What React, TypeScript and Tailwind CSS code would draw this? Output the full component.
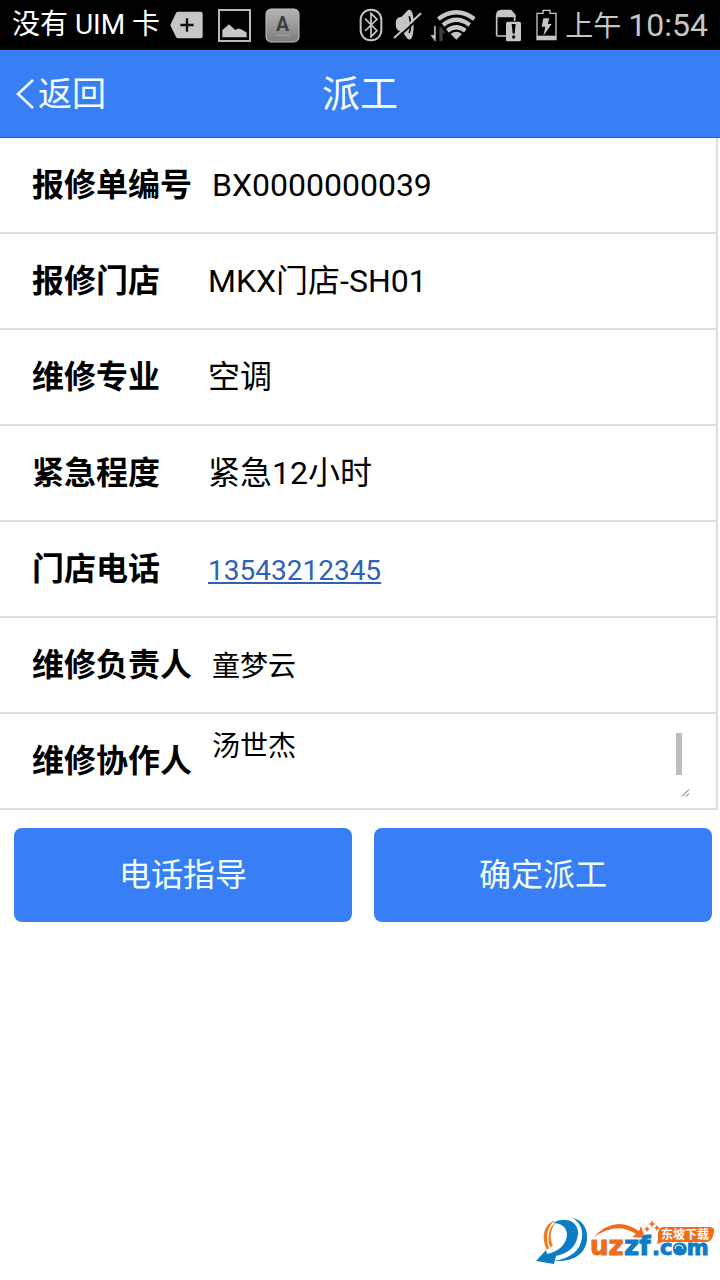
import React, { useState } from 'react';

interface RowProps {
  label: string;
  htmlFor?: string;
  children: React.ReactNode;
}

const Row: React.FC<RowProps> = ({ label, htmlFor, children }) => (
  <div className="flex h-24 items-center border-b-2 border-[#dcdcdc] pl-8 pr-[26px]">
    {htmlFor ? (
      <label htmlFor={htmlFor} className="w-44 shrink-0 text-[32px] font-bold">
        {label}
      </label>
    ) : (
      <span className="w-44 shrink-0 text-[32px] font-bold">{label}</span>
    )}
    {children}
  </div>
);

const StatusBar = () => (
  <div className="flex h-[50px] items-center justify-between bg-black px-3">
    <div className="flex items-center">
      <span className="whitespace-nowrap text-[28px] leading-none text-white">没有 UIM 卡</span>
      {/* Tag with plus */}
      <svg className="ml-2.5 shrink-0" width="33" height="28" viewBox="0 0 99 84">
        <path d="M24 2h68q6 0 6 6v68q0 6-6 6H24q-4 0-6-4L2 45q-2-3 0-6L18 6q2-4 6-4z" fill="#c6c6c6" />
        <path d="M31 42h40M51 22v40" stroke="#111" strokeWidth="7" />
      </svg>
      {/* Screenshot saved */}
      <svg className="ml-[15px] shrink-0" width="33" height="33" viewBox="0 0 98 98">
        <rect x="3" y="3" width="92" height="92" fill="none" stroke="#b9b9b9" strokeWidth="6" />
        <path d="M13 84V62l20-17 18 17 9-4 10 3 15 9v14z" fill="#c6c6c6" />
      </svg>
      {/* Input method */}
      <svg className="ml-[14px] shrink-0" width="35" height="35" viewBox="0 0 104 104">
        <defs>
          <linearGradient id="key" x1="0" y1="0" x2="0" y2="1">
            <stop offset="0" stopColor="#b4b4b4" />
            <stop offset="1" stopColor="#7d7d7d" />
          </linearGradient>
        </defs>
        <rect x="3" y="3" width="98" height="98" rx="15" fill="url(#key)" stroke="#c4c4c4" strokeWidth="3" />
        <text x="52" y="68" textAnchor="middle" fontSize="58" fontWeight="bold" fill="#3c3c3c" fontFamily="Roboto, sans-serif">
          A
        </text>
        <path d="M32 81h40" stroke="#aaa" strokeWidth="3" />
      </svg>
    </div>

    <div className="flex items-center">
      {/* Bluetooth */}
      <svg className="shrink-0" width="24" height="34" viewBox="0 0 72 102">
        <rect x="5" y="5" width="62" height="92" rx="30" fill="none" stroke="#c6c6c6" strokeWidth="6" />
        <path d="M18 32l36 36-18 18V16l18 18-36 35" fill="none" stroke="#c6c6c6" strokeWidth="5" />
      </svg>
      {/* Muted speaker */}
      <svg className="ml-2.5 shrink-0" width="29" height="32" viewBox="0 0 87 96">
        <path d="M10 32q4-8 16-9L42 6q8-8 14 1 6 12 6 40t-6 40q-6 9-14 1L27 67q-13 0-17-9-4-13 0-26z" fill="#c6c6c6" />
        <path d="M49 22q7 26 0 50" fill="none" stroke="#000" strokeWidth="5" />
        <path d="M8 91L90 17" stroke="#000" strokeWidth="6" />
        <path d="M3 87L84 13" stroke="#c6c6c6" strokeWidth="6" />
      </svg>
      {/* Wifi with traffic arrows */}
      <svg className="ml-2 shrink-0" width="47" height="33" viewBox="0 0 141 99">
        <path d="M79 92L62 75q17-13 34 0z" fill="#c6c6c6" />
        <path d="M52 65q27-20 54 0M39 48q40-31 80 0M25 30q54-40 108 0" fill="none" stroke="#c6c6c6" strokeWidth="13" />
        <path d="M16 52v44L3 79h10V52z" fill="#c6c6c6" stroke="#c6c6c6" strokeWidth="2" />
        <path d="M28 97V53h4l15 20h-9v24z" fill="#3c3c3c" />
      </svg>
      {/* No SIM */}
      <svg className="ml-[18px] shrink-0" width="27" height="33" viewBox="0 0 81 99">
        <path d="M5 80V19L19 5h28l12 13v18M5 81h31" fill="none" stroke="#c6c6c6" strokeWidth="5" />
        <path d="M4 25V14Q5 3 18 3h30l13 14v8z" fill="#c6c6c6" />
        <rect x="33" y="38" width="45" height="59" rx="5" fill="#c6c6c6" />
        <path d="M50 45h12l-3 29h-6z" fill="#000" />
        <circle cx="56" cy="84" r="5" fill="#000" />
      </svg>
      {/* Charging battery */}
      <svg className="ml-3.5 shrink-0" width="21" height="32" viewBox="0 0 63 96">
        <path d="M3 92V13h18V4h21v9h18v79z" fill="none" stroke="#c6c6c6" strokeWidth="4" />
        <rect x="3" y="80" width="57" height="13" fill="#c6c6c6" />
        <path d="M22 28h18l-5 17h12L22 80l6-27H17z" fill="#c6c6c6" />
      </svg>
      <span className="ml-2 whitespace-nowrap text-[28px] leading-none text-[#c6c6c6]">
        上午 <span className="text-[32px] leading-none">10:54</span>
      </span>
    </div>
  </div>
);

const SiteLogo = () => (
  <svg width="192" height="54" viewBox="0 0 192 54">
    {/* Round arrow mark */}
    <path d="M27 2C15 7 13 20 19 32L21 30C17 19 19 9 27 2z" fill="#ef7d1f" />
    <path d="M28 4C20 10 19 20 22 29L25 28C21 20 22 12 28 4z" fill="#ef7d1f" />
    <path
      d="M25 5C35-2 51 2 50 16C49 28 41 35 28 38L26 46L8 43L18 32L19 36C30 34 38 27 39 17C39 9 33 5 25 5z"
      fill="#0d7cc4"
    />
    <path d="M45 0C57 3 60 14 59 22C57 36 46 44 26 43C43 40 52 33 54 20C55 11 52 5 45 0z" fill="#0d7cc4" />
    {/* Swoosh above the name */}
    <path d="M65 20Q86-4 111 13L113 8L117 20L104 19L108 16Q88 3 65 20z" fill="#ef6d1a" />
    <g fontFamily="'DejaVu Sans', sans-serif" fontWeight="bold" strokeWidth="1">
      <text x="62" y="37" fontSize="26" fill="#ef6d1a" stroke="#ef6d1a">
        uz
      </text>
      <text x="96" y="37" fontSize="26" fill="#0d7cc4" stroke="#0d7cc4">
        zf
      </text>
      <text x="124" y="37" fontSize="21" fill="#0d7cc4" stroke="#0d7cc4">
        .com
      </text>
    </g>
    <circle cx="151" cy="31" r="4" fill="#0d7cc4" />
    <path d="M147 31a4 4 0 0 1 8 0" fill="none" stroke="#fff" strokeWidth="1" />
    {/* Sparkles */}
    <path
      d="M124 2l1 3 3 1-3 1-1 3-1-3-3-1 3-1zM119 8l1 2 2 1-2 1-1 2-1-2-2-1 2-1zM129 7l1 2 2 1-2 1-1 2-1-2-2-1 2-1z"
      fill="#ef6d1a"
    />
    <path d="M135 9h46q6 0 5 5l-1 4q-2 6-7 6h-43l-6 2 1-5v-6q1-6 5-6z" fill="#ef6d1a" />
    <text x="133" y="21" fontSize="12" fontWeight="bold" fill="#fff" fontFamily="'Noto Sans CJK SC', sans-serif">
      东坡下载
    </text>
  </svg>
);

export default function App() {
  const [orderNo, setOrderNo] = useState('BX0000000039');
  const [owner, setOwner] = useState('童梦云');
  const [helpers, setHelpers] = useState('汤世杰');

  return (
    <div className="flex min-h-screen flex-col bg-white font-['Roboto','Noto_Sans_CJK_SC',sans-serif] text-black">
      <StatusBar />

      <header className="grid h-22 grid-cols-3 items-center border-b border-[#2a5cc0] bg-[#387ff5] px-4 text-[#f4ffff]">
        <button type="button" className="flex items-center gap-1 text-[34px] leading-none">
          <svg width="18" height="30" viewBox="0 0 18 30" fill="none" stroke="currentColor" strokeWidth="2.5">
            <path d="M17 1L2 15l15 14" />
          </svg>
          返回
        </button>
        <h1 className="text-center text-[38px] leading-none">派工</h1>
      </header>

      <main>
        <div className="mr-0.5 border-r-2 border-[#dcdcdc]">
          <Row label="报修单编号" htmlFor="order-no">
            <input
              id="order-no"
              className="min-w-0 flex-1 px-1 text-[32px] outline-none"
              value={orderNo}
              onChange={(e) => setOrderNo(e.target.value)}
            />
          </Row>
          <Row label="报修门店">
            <span className="text-[32px]">MKX门店-SH01</span>
          </Row>
          <Row label="维修专业">
            <span className="text-[32px]">空调</span>
          </Row>
          <Row label="紧急程度">
            <span className="text-[32px]">紧急12小时</span>
          </Row>
          <Row label="门店电话">
            <a href="tel:13543212345" className="pt-1 text-[28px] text-[#2f62b5] underline decoration-2 underline-offset-2">
              13543212345
            </a>
          </Row>
          <Row label="维修负责人" htmlFor="owner">
            <input
              id="owner"
              className="min-w-0 flex-1 px-1 pt-1 text-[28px] outline-none"
              value={owner}
              onChange={(e) => setOwner(e.target.value)}
            />
          </Row>
          <Row label="维修协作人" htmlFor="helpers">
            <div className="relative flex-1">
              <textarea
                id="helpers"
                className="block h-18 w-full resize-none overflow-hidden px-1 pt-1 text-[28px] leading-9 outline-none"
                value={helpers}
                onChange={(e) => setHelpers(e.target.value)}
              />
              <div className="absolute right-2 top-2 h-[42px] w-1.5 bg-[#bdbdbd]" />
              <svg className="absolute bottom-0 right-0" width="9" height="8" viewBox="0 0 9 8" stroke="#555">
                <path d="M1 7.5L8 .5M5 7.5L8 4.5" />
              </svg>
            </div>
          </Row>
        </div>

        <div className="grid grid-cols-2 gap-[22px] pb-4 pl-3.5 pr-2 pt-[18px]">
          <button type="button" className="h-[94px] rounded-lg bg-[#387ff5] text-[32px] text-[#f4ffff]">
            电话指导
          </button>
          <button type="button" className="h-[94px] rounded-lg bg-[#387ff5] text-[32px] text-[#f4ffff]">
            确定派工
          </button>
        </div>
      </main>

      <footer className="mt-auto flex justify-end pb-2">
        <SiteLogo />
      </footer>
    </div>
  );
}
